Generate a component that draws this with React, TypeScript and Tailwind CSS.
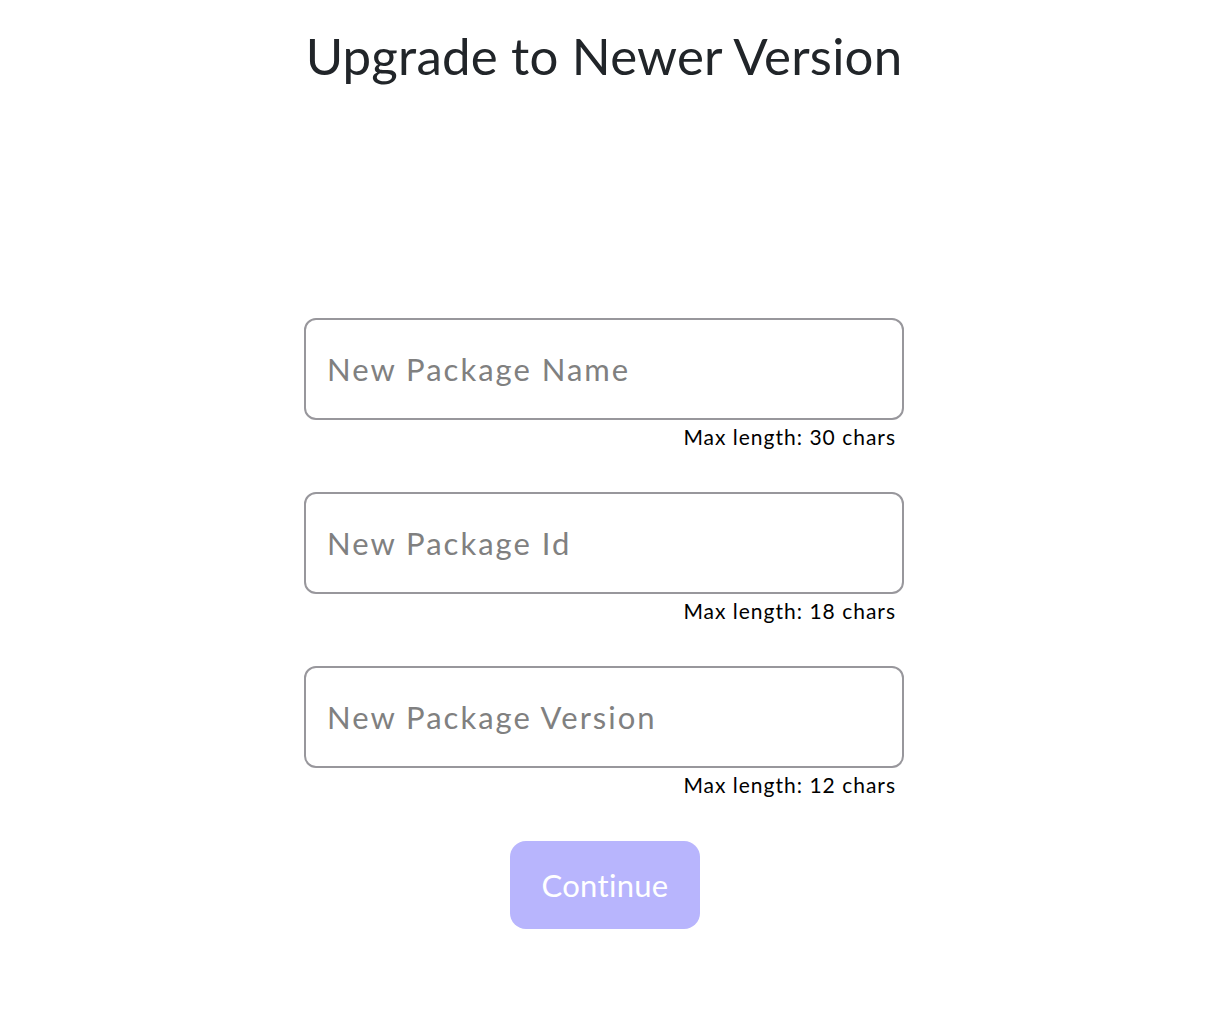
import React from 'react'

const fields = [
  { placeholder: 'New Package Name', max: 30 },
  { placeholder: 'New Package Id', max: 18 },
  { placeholder: 'New Package Version', max: 12 },
]

const App = () => {
  return (
    <div className="min-h-screen bg-white pr-[10px] font-['Lato',sans-serif]">
      <div className="mx-auto flex w-[600px] flex-col items-center">
        <h1 className="mt-[22px] whitespace-nowrap text-[51px] leading-[68px] tracking-[0.2px] text-[#212529]">
          Upgrade to Newer Version
        </h1>

        <form className="mt-[228px] flex w-full flex-col gap-[40px]">
          {fields.map((f) => (
            <div key={f.placeholder} className="flex flex-col">
              <input
                type="text"
                maxLength={f.max}
                placeholder={f.placeholder}
                className="h-[102px] w-full rounded-[12px] border-2 border-[#98979c] px-[21px] text-[31px] tracking-[2px] text-[#333] outline-none placeholder:text-[#808080]"
              />
              <span className="mt-[2px] self-end pr-[8px] text-[21px] leading-[30px] tracking-[1px] text-black">
                Max length: {f.max} chars
              </span>
            </div>
          ))}
        </form>

        <button
          type="button"
          className="ml-[2px] mt-[41px] h-[88px] w-[190px] rounded-[16px] bg-[#b8b5fd] text-[31px] tracking-[0.3px] text-white"
        >
          Continue
        </button>
      </div>
    </div>
  )
}

export default App
